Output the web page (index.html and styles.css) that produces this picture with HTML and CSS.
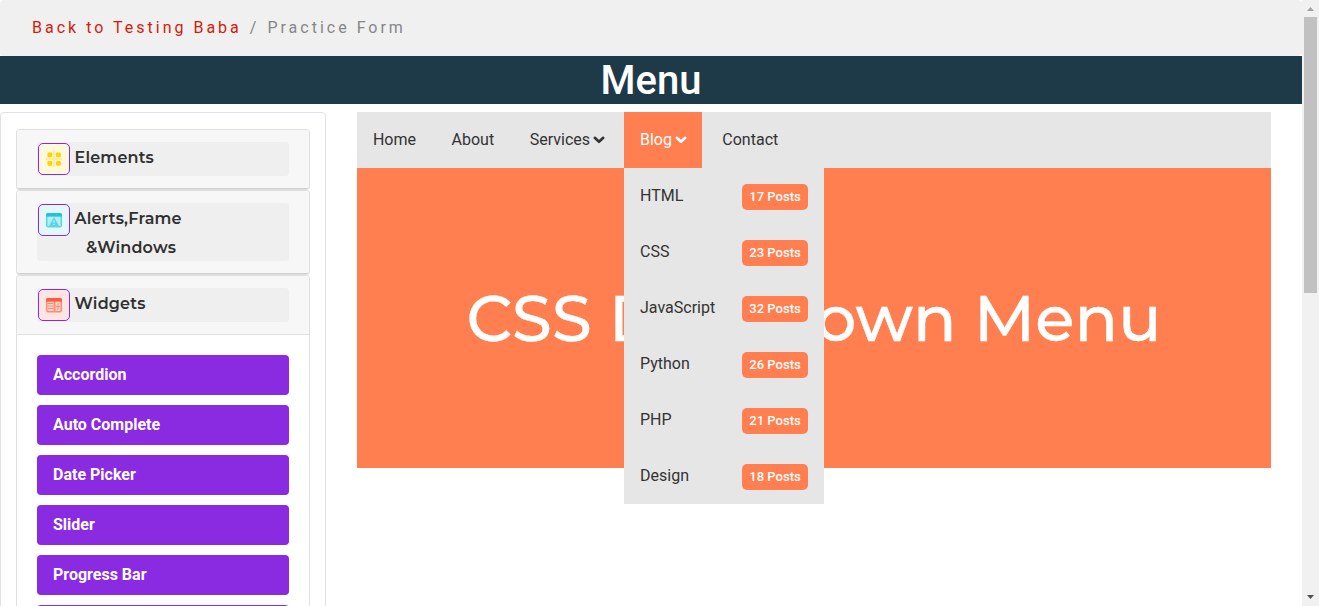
FILE: index.html
```
<!DOCTYPE html>
<html lang="en">
<head>
<meta charset="utf-8">
<title>Menu</title>
<link rel="stylesheet" href="styles.css">
</head>
<body>
<div class="window">
  <div class="page">
    <nav class="breadcrumb"><a>Back to Testing Baba</a><span class="sep">/</span><span>Practice Form</span></nav>
    <h1 class="title">Menu</h1>
    <div class="columns">
      <aside class="sidebar">
        <section class="card">
          <div class="card-head"><div class="toggle">
            <svg class="icon yellow" viewBox="0 0 30 30"><path d="M15 7v16M7 15h16" stroke="#ffe78c" stroke-width="1.500"/><g fill="#ffd200"><rect x="8.500" y="8.500" width="4.800" height="4.800" rx="1"/><rect x="17" y="8.500" width="4.800" height="4.800" rx="1"/><rect x="8.500" y="17" width="4.800" height="4.800" rx="1"/><rect x="17" y="17" width="4.800" height="4.800" rx="1"/></g></svg>
            <span class="label">Elements</span></div></div>
        </section>
        <section class="card">
          <div class="card-head"><div class="toggle tall">
            <svg class="icon cyan" viewBox="0 0 30 30"><rect x="7" y="8" width="16" height="14.500" rx="2" fill="#5bd5e3"/><rect x="8.500" y="11.500" width="13" height="9.500" fill="#b5edf3"/><path d="M7 11.500V10a2 2 0 0 1 2-2h12a2 2 0 0 1 2 2v1.500z" fill="#22c3d6"/><path d="M15 12l5 9H10z" fill="#5bd5e3"/><path d="M15 15v3M15 19v1" stroke="#c9f3f7"/></svg>
            <span class="label">Alerts,Frame</span><span class="label second">&amp;Windows</span></div></div>
        </section>
        <section class="card open">
          <div class="card-head"><div class="toggle">
            <svg class="icon red" viewBox="0 0 30 30"><rect x="7" y="8" width="16" height="14.500" rx="2" fill="#ff8a75"/><rect x="8.500" y="11.500" width="6" height="9.500" fill="#ffd3cb"/><rect x="16.500" y="11.500" width="5" height="9.500" fill="#ffd3cb"/><path d="M7 11.500V10a2 2 0 0 1 2-2h12a2 2 0 0 1 2 2v1.500z" fill="#ff5b40"/><path d="M9 13.500h5M9 16h5M9 18.500h5" stroke="#ff8a75"/><path d="M17 16.500h4M19 13v7" stroke="#ff8a75"/></svg>
            <span class="label">Widgets</span></div></div>
          <ul class="links">
            <li>Accordion</li><li>Auto Complete</li><li>Date Picker</li><li>Slider</li><li>Progress Bar</li><li></li>
          </ul>
        </section>
      </aside>
      <main class="demo">
        <ul class="menu">
          <li>Home</li><li>About</li>
          <li class="services">Services<svg class="caret" viewBox="0 0 12 8"><path d="M1.800 1.800L6 5.800l4.200-4" /></svg></li>
          <li class="active">Blog<svg class="caret" viewBox="0 0 12 8"><path d="M1.800 1.800L6 5.800l4.200-4" /></svg>
            <ul class="dropdown">
              <li>HTML<span class="badge">17 Posts</span></li>
              <li>CSS<span class="badge">23 Posts</span></li>
              <li>JavaScript<span class="badge">32 Posts</span></li>
              <li>Python<span class="badge">26 Posts</span></li>
              <li>PHP<span class="badge">21 Posts</span></li>
              <li>Design<span class="badge">18 Posts</span></li>
            </ul>
          </li>
          <li>Contact</li>
        </ul>
        <div class="hero">CSS Dropdown Menu</div>
      </main>
    </div>
  </div>
  <div class="scrollbar">
    <svg class="arrow" viewBox="0 0 17 17"><path d="M5 11h7L8.500 7z" fill="#a3a3a3"/></svg>
    <div class="thumb"></div>
    <svg class="arrow down" viewBox="0 0 17 17"><path d="M5 6h7l-3.500 4z" fill="#505050"/></svg>
  </div>
</div>
</body>
</html>
```
FILE: styles.css
```
* { box-sizing: border-box; }
body { margin: 0; overflow: hidden; background: #fff; color: #333; font: 400 16px/24px Roboto, sans-serif; }
ul { list-style: none; margin: 0; padding: 0; }
.window { display: flex; height: 606px; overflow: hidden; }
.page { width: 1302px; flex: none; }
.breadcrumb { height: 56px; padding: 16px 32px; display: flex; background: #f0f0f0; border-radius: 4px; color: #868686; letter-spacing: 3px; white-space: nowrap; }
.breadcrumb a { color: #d01c0b; }
.sep { padding: 0 8px; }
.title { margin: 0 0 8px; height: 48px; padding-top: 1px; background: #1e3948; color: #fff; font-size: 40px; font-weight: 500; line-height: 48px; text-align: center; }
.columns { display: flex; align-items: flex-start; gap: 31px; }
.sidebar { width: 326px; height: 520px; padding: 16px 15px; border: 1px solid #dee2e6; border-radius: 4px; }
.card { border: 1px solid #dfdfdf; border-bottom-color: #cfcfcf; border-radius: 4px; margin-bottom: 1px; overflow: hidden; box-shadow: 0 1px 0 #dfdfdf; }
.card-head { padding: 12px 20px; background: #f7f7f7; }
.open .card-head { border-bottom: 1px solid #dfdfdf; }
.toggle { height: 34px; padding-left: 1px; display: flex; flex-wrap: wrap; align-content: flex-start; align-items: flex-start; column-gap: 4.500px; background: #efefef; border-radius: 4px; }
.tall { height: 58px; }
.icon { width: 32px; height: 32px; margin-top: 1px; border: 1px solid #8a2be2; border-radius: 5px; fill: none; }
.yellow { background: #fff9dc; }
.cyan { background: #e2f8fb; }
.red { background: #ffe5e1; }
.label { font: 600 16px/32px Montserrat, Inter, sans-serif; letter-spacing: .18px; color: #303030; white-space: nowrap; }
.second { flex-basis: 100%; margin-top: -4px; padding-left: 48px; }
.links { padding: 20px; display: flex; flex-direction: column; gap: 10px; }
.links li { height: 40px; padding: 0 16px; background: #8a2be2; border-radius: 4px; color: #fff; font-weight: 700; line-height: 39px; }
.demo { width: 914px; }
.menu { height: 56px; display: flex; gap: 3.800px; background: #e6e6e6; line-height: 56px; }
.menu > li { position: relative; padding: 0 15.900px; white-space: nowrap; }
.menu > .services { padding-right: 15.200px; }
.menu > .active { width: 78px; background: #ff7f50; color: #fff; }
.menu > li:last-child { padding-left: 16.500px; }
.caret { width: 12px; height: 8px; margin-left: 3px; vertical-align: 1px; fill: none; stroke: currentColor; stroke-width: 2.600; stroke-linecap: round; stroke-linejoin: round; }
.dropdown { position: absolute; top: 56px; left: 0; width: 200px; z-index: 2; background: #e6e6e6; color: #333; }
.dropdown li { height: 56px; padding: 0 16px; display: flex; justify-content: space-between; }
.badge { height: 26px; width: 66px; margin-top: 16px; background: #ff7f50; border-radius: 5px; color: #fff; font-size: 13px; font-weight: 500; line-height: 26px; text-align: center; }
.hero { height: 300px; display: flex; justify-content: center; align-items: center; background: #ff7f50; color: #fff; font: 500 64px/78px Montserrat, Inter, sans-serif; letter-spacing: .08px; -webkit-text-stroke: .4px #fff; white-space: nowrap; }
.scrollbar { width: 17px; flex: none; display: flex; flex-direction: column; background: #f1f1f1; }
.arrow { width: 17px; height: 17px; flex: none; }
.thumb { width: 13px; height: 276px; margin: 0 2px; background: #c1c1c1; }
.down { margin-top: auto; }
```
